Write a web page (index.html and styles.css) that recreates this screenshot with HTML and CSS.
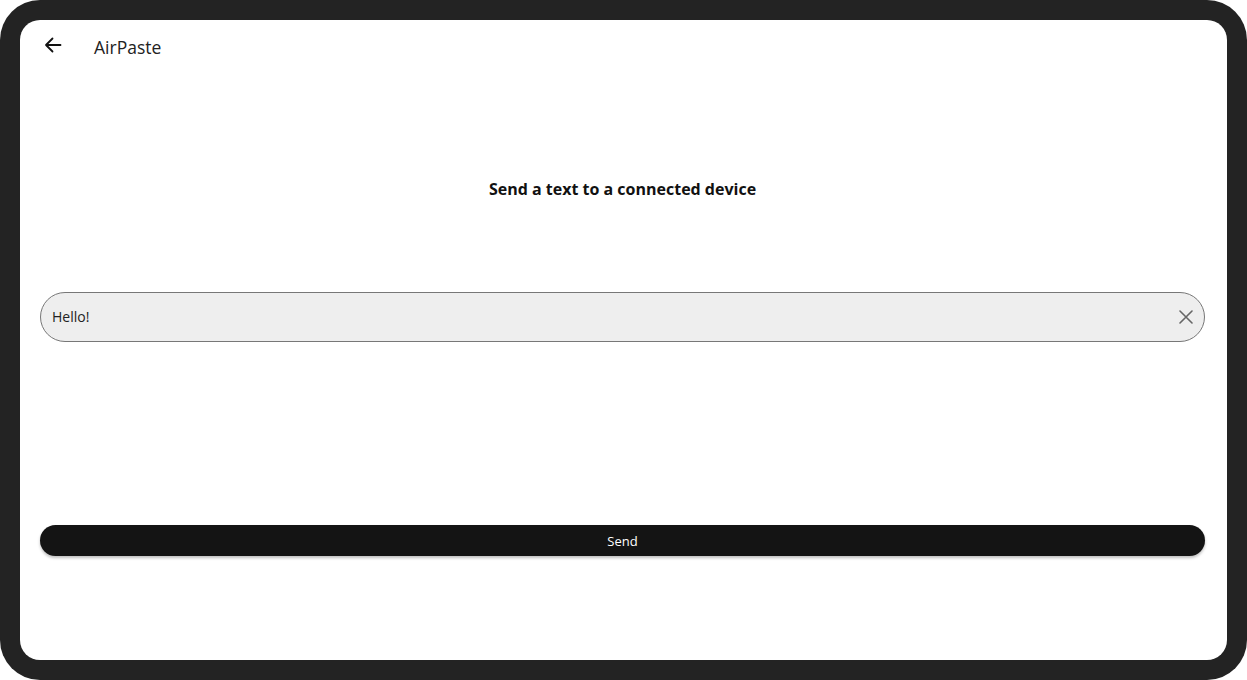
FILE: index.html
```html
<!DOCTYPE html>
<html lang="en">
<head>
<meta charset="utf-8">
<title>AirPaste</title>
<link rel="stylesheet" href="styles.css">
</head>
<body>
<div class="frame">
  <div class="screen">
    <header class="appbar">
      <span class="back">
        <svg width="18" height="18" viewBox="0 0 18 18" fill="none" stroke="#111" stroke-width="1.8" stroke-linecap="round" stroke-linejoin="round">
          <path d="M16.5 9H2M8.5 2.5L2 9l6.5 6.5"/>
        </svg>
      </span>
      <span class="title">AirPaste</span>
    </header>
    <h1 class="heading">Send a text to a connected device</h1>
    <div class="field">
      <span class="field-text">Hello!</span>
      <span class="clear">
        <svg width="14" height="14" viewBox="0 0 14 14" stroke="#666" stroke-width="1.6" stroke-linecap="round">
          <path d="M1 1l12 12M13 1L1 13"/>
        </svg>
      </span>
    </div>
    <button class="send">Send</button>
  </div>
</div>
</body>
</html>
```
FILE: styles.css
```css
html, body {
  margin: 0;
  padding: 0;
  background: #ffffff;
}
body {
  font-family: "Open Sans", "Noto Sans", sans-serif;
}
.frame {
  width: 1247px;
  height: 680px;
  box-sizing: border-box;
  padding: 20px;
  background: #232323;
  border-radius: 40px;
}
.screen {
  height: 640px;
  box-sizing: border-box;
  background: #ffffff;
  border-radius: 20px;
  padding: 0 22px 0 20px;
  display: flex;
  flex-direction: column;
}
.appbar {
  height: 56px;
  display: flex;
  align-items: center;
}
.back {
  display: flex;
  margin-left: 4px;
  margin-top: -6px;
}
.title {
  margin-left: 32px;
  margin-top: -3px;
  font-size: 17.5px;
  color: #222;
}
.heading {
  margin: 101px 0 0;
  font-size: 16px;
  line-height: 24px;
  font-weight: 700;
  text-align: center;
  color: #111;
}
.field {
  margin-top: 91px;
  height: 50px;
  box-sizing: border-box;
  border: 1px solid #777;
  border-radius: 25px;
  background: #eeeeee;
  display: flex;
  align-items: center;
  padding: 0 11px 2px 11px;
}
.field-text {
  flex: 1;
  font-size: 14px;
  color: #222;
}
.clear {
  display: flex;
  margin-top: 2px;
}
.send {
  margin-top: 183px;
  height: 31px;
  border: none;
  border-radius: 16px;
  background: #141414;
  color: #fff;
  font-family: inherit;
  font-size: 13px;
  box-shadow: 0 2px 3px rgba(0,0,0,0.25);
}
```
